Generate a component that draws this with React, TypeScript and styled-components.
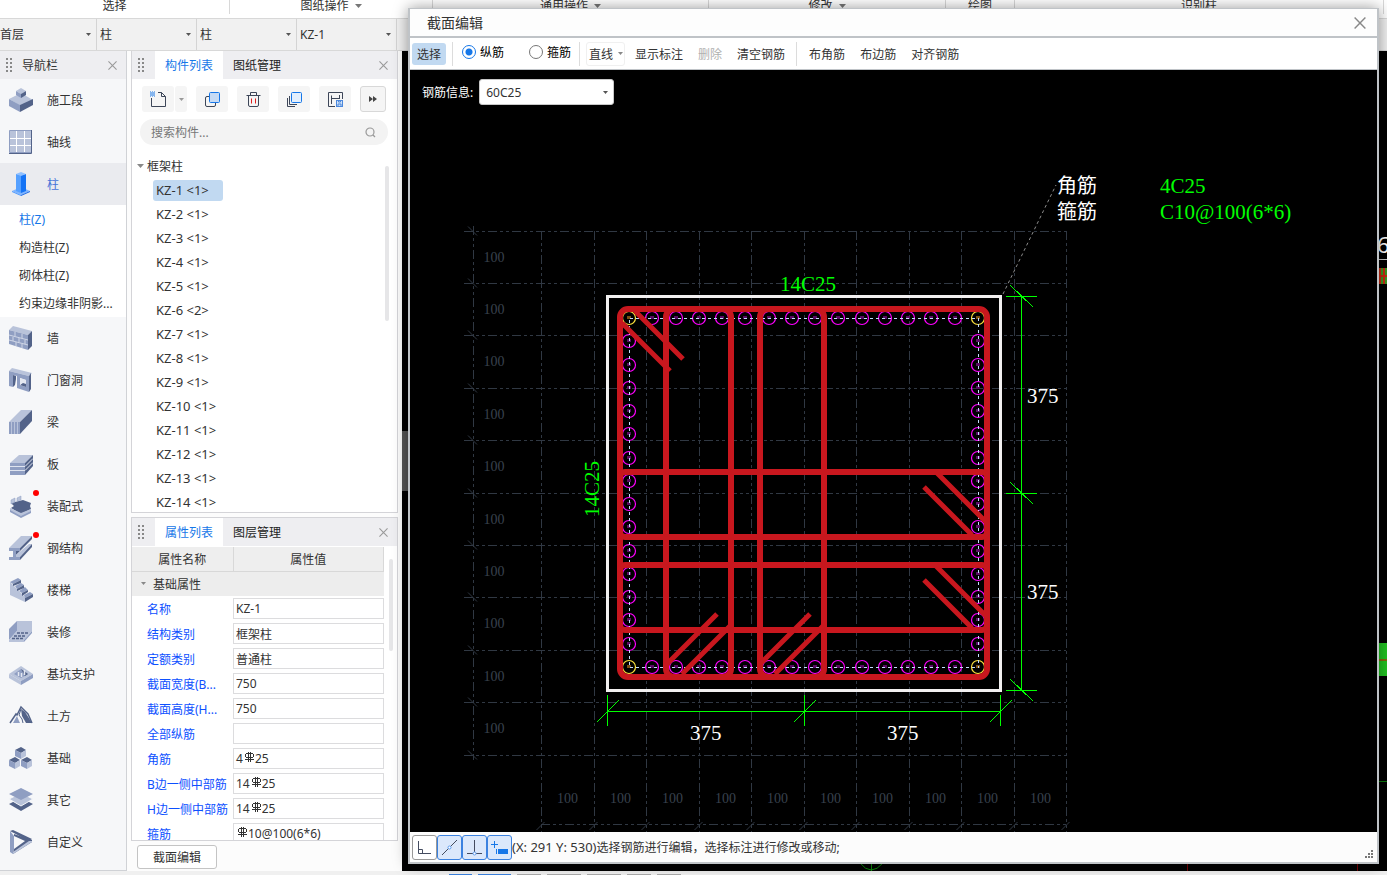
import React from "react";
import styled, { createGlobalStyle } from "styled-components";

const Global = createGlobalStyle`
  *, *::before, *::after { box-sizing: border-box; }
  body { margin: 0; }
  body, button, input, select {
    font-family: "Noto Sans", "Noto Sans CJK SC", sans-serif;
    font-size: 12px;
    color: #333;
  }
  button { cursor: pointer; }
`;

const blue = "#1677e8";

/* ---------- page frame ---------- */

const Page = styled.div`
  position: relative;
  display: flex;
  flex-direction: column;
  height: 100vh;
  overflow: hidden;
  background: #fcfcfc;
`;

const Ribbon = styled.header`
  display: flex;
  flex: none;
  height: 19px;
  overflow: hidden;
  background: #fff;
  border-bottom: 1px solid #d8d8d8;
`;

const RibbonGroup = styled.div<{ $basis: number; $last?: boolean }>`
  display: flex;
  flex: ${(p) => (p.$last ? "1 1" : "0 0")} ${(p) => p.$basis}px;
  justify-content: center;
  align-items: center;
  gap: 6px;
  height: 14px;
  padding-bottom: 2px;
  line-height: 12px;
  border-right: 1px solid #d8d8d8;
`;

const RibbonEnd = styled.div`
  flex: none;
  width: 3px;
`;

const ComboBar = styled.div`
  display: flex;
  flex: none;
  height: 32px;
  background: #f0f0f0;
  border-bottom: 1px solid #d8d8d8;
`;

const SelectBox = styled.label<{ $width: number; $boxed?: boolean }>`
  position: relative;
  display: flex;
  align-items: center;
  width: ${(p) => p.$width}px;
  height: ${(p) => (p.$boxed ? "26px" : "auto")};
  border: ${(p) => (p.$boxed ? "1px solid #c8c8c8" : "0 solid #d4d4d4")};
  border-right-width: 1px;
  border-radius: ${(p) => (p.$boxed ? "3px" : "0")};
  background: ${(p) => (p.$boxed ? "#fff" : "#f1f1f1")};
  > svg {
    position: absolute;
    right: 5px;
    pointer-events: none;
  }
`;

const Select = styled.select<{ $pad: number }>`
  appearance: none;
  width: 100%;
  height: 100%;
  padding: 0 16px 0 ${(p) => p.$pad}px;
  border: 0;
  background: transparent;
`;

const Work = styled.div`
  display: flex;
  flex: 1;
  min-height: 0;
`;

const Footer = styled.footer`
  display: flex;
  flex: none;
  gap: 6px;
  height: 4px;
  padding: 3px 0 0 449px;
  background: #f0f0f0;
`;

const FooterTab = styled.div<{ $width: number; $on?: boolean }>`
  width: ${(p) => p.$width}px;
  height: 1px;
  background: ${(p) => (p.$on ? "#3b82e0" : "#aaa")};
`;

/* ---------- shared panel parts ---------- */

const PanelHead = styled.div`
  display: flex;
  flex: none;
  align-items: stretch;
  height: 28px;
  padding-right: 7px;
  background: #eeeef1;
`;

const Grip = styled.div<{ $width: number }>`
  display: flex;
  align-items: center;
  width: ${(p) => p.$width}px;
  padding-left: 6px;
`;

const HeadTitle = styled.h2`
  flex: 1;
  margin: 0;
  font-size: 12px;
  font-weight: 400;
  line-height: 30px;
`;

const Tab = styled.button<{ $on?: boolean }>`
  padding: 0 10px;
  border: 0;
  background: ${(p) => (p.$on ? "#fff" : "transparent")};
  color: ${(p) => (p.$on ? blue : "#222")};
`;

const CloseButton = styled.button`
  display: flex;
  align-items: center;
  margin-left: auto;
  padding: 0 2px;
  border: 0;
  background: transparent;
`;

/* ---------- navigation ---------- */

const Nav = styled.nav`
  display: flex;
  flex: none;
  flex-direction: column;
  width: 127px;
  overflow: hidden;
  background: #f6f7f9;
  border-right: 1px solid #d0d2d6;
  border-bottom: 1px solid #d0d2d6;
`;

const NavItem = styled.button<{ $on?: boolean }>`
  display: flex;
  flex: none;
  align-items: center;
  gap: 14px;
  height: 42px;
  padding: 0 0 0 9px;
  border: 0;
  background: ${(p) => (p.$on ? "#eaebef" : "transparent")};
  color: ${(p) => (p.$on ? "#4674d8" : "#333")};
  text-align: left;
`;

const IconHolder = styled.span`
  position: relative;
  display: flex;
  width: 24px;
`;

const Dot = styled.i`
  position: absolute;
  top: -4px;
  right: -6px;
  width: 6px;
  height: 6px;
  border-radius: 50%;
  background: #f00;
`;

const SubList = styled.div`
  display: flex;
  flex: none;
  flex-direction: column;
  background: #fff;
`;

const SubItem = styled.button<{ $on?: boolean }>`
  height: 28px;
  padding: 0 0 0 19px;
  border: 0;
  background: transparent;
  color: ${(p) => (p.$on ? blue : "#333")};
  text-align: left;
  white-space: nowrap;
`;

/* ---------- component list and properties ---------- */

const Side = styled.div`
  display: flex;
  flex: none;
  flex-direction: column;
  gap: 4px;
  width: 275px;
  padding: 0 4px 0 4px;
  background: #fcfcfc;
`;

const Panel = styled.section<{ $fixed?: boolean }>`
  display: flex;
  flex: ${(p) => (p.$fixed ? "0 0 324px" : "1 1 0")};
  flex-direction: column;
  min-height: 0;
  overflow: hidden;
  border: 1px solid #d4d4d8;
  border-top-width: ${(p) => (p.$fixed ? "1px" : "0")};
  background: #fff;
`;

const ToolRow = styled.div`
  display: flex;
  gap: 9px;
  padding: 7px 9px 7px 10px;
`;

const ToolButton = styled.button<{ $width?: number; $outlined?: boolean }>`
  display: flex;
  align-items: center;
  justify-content: center;
  width: ${(p) => p.$width ?? 32}px;
  height: 26px;
  padding: 0;
  border: ${(p) => (p.$outlined ? "1px solid #d8d8d8" : "0")};
  border-radius: 3px;
  background: #f5f5f5;
`;

const SplitButton = styled.div`
  display: flex;
  gap: 1px;
`;

const Search = styled.label`
  display: flex;
  align-items: center;
  height: 26px;
  margin: 0 9px 0 8px;
  padding: 0 12px 0 11px;
  border-radius: 13px;
  background: #f3f3f3;
  input {
    flex: 1;
    min-width: 0;
    padding: 0;
    border: 0;
    background: transparent;
    outline: 0;
  }
  input::placeholder { color: #777; opacity: 1; }
`;

const TreeArea = styled.div`
  display: flex;
  flex: 1;
  justify-content: space-between;
  min-height: 0;
  padding: 9px 8px 0 5px;
`;

const Tree = styled.ul`
  margin: 0;
  padding: 0;
  overflow: hidden;
  list-style: none;
`;

const TreeGroup = styled.li`
  display: flex;
  align-items: center;
  gap: 3px;
  height: 24px;
`;

const TreeItem = styled.li`
  display: flex;
  align-items: center;
  height: 24px;
  padding-left: 16px;
`;

const TreeChip = styled.button<{ $on?: boolean }>`
  min-width: 70px;
  height: 21px;
  padding: 0 3px;
  border: 0;
  border-radius: 3px;
  background: ${(p) => (p.$on ? "#c1d9f1" : "transparent")};
  font-size: 13px;
  line-height: 20px;
  text-align: left;
  white-space: nowrap;
`;

const Thumb = styled.div<{ $height: number }>`
  flex: none;
  width: 4px;
  height: ${(p) => p.$height}px;
  margin-top: 12px;
  border-radius: 2px;
  background: #e6e6e8;
`;

const PropArea = styled.div`
  display: flex;
  justify-content: space-between;
  min-height: 0;
  padding: 1px 4px 0 0;
`;

const PropTable = styled.table`
  width: 252px;
  border-collapse: collapse;
  table-layout: fixed;
  th, td { padding: 0; font-weight: 400; }
  thead th {
    height: 24px;
    padding-top: 1px;
    background: #eee;
    border-right: 1px solid #d8d8d8;
    border-bottom: 1px solid #d8d8d8;
  }
  tbody tr { height: 25px; }
`;

const GroupCell = styled.th`
  background: #ededed;
  text-align: left;
  > span {
    display: flex;
    align-items: center;
    gap: 7px;
    padding-left: 9px;
  }
`;

const PropName = styled.th`
  color: #0d50ff;
  text-align: left;
  white-space: nowrap;
  > span { padding-left: 15px; }
`;

const ValueBox = styled.div`
  display: flex;
  align-items: center;
  height: 21px;
  padding-left: 2px;
  border: 1px solid #dcdcde;
  background: #fff;
  line-height: 18px;
  > svg { flex: none; margin: 0 1px 4px; }
  input {
    flex: 1;
    min-width: 0;
    height: 18px;
    padding: 0;
    border: 0;
    background: transparent;
    outline: 0;
  }
`;

const SideFoot = styled.div`
  flex: none;
  height: 26px;
  padding-left: 6px;
`;

const EditButton = styled.button`
  display: block;
  width: 80px;
  height: 24px;
  border: 1px solid #c4c4c4;
  border-radius: 3px;
  background: #fff;
`;

const ModelCanvas = styled.main`
  flex: 1;
  min-width: 0;
  background: #000;
  svg { display: block; width: 100%; height: 100%; }
`;

/* ---------- section editing window ---------- */

const Window = styled.section`
  position: absolute;
  top: 8px;
  right: 8px;
  bottom: 11px;
  left: 408px;
  display: flex;
  flex-direction: column;
  border: 1px solid #bfc3c7;
  border-width: 1px 2px 2px;
  background: #fcfcfc;
  box-shadow: 0 0 14px rgba(0, 0, 0, 0.4);
`;

const WindowTitle = styled.div`
  display: flex;
  flex: none;
  align-items: center;
  height: 29px;
  padding: 0 9px 0 17px;
  border-bottom: 2px solid #bfc3c7;
  background: #fdfdfd;
  h1 { margin: 0; font-size: 14px; font-weight: 400; line-height: 26px; }
`;

const WindowTools = styled.div`
  display: flex;
  flex: none;
  align-items: center;
  height: 32px;
  padding-left: 2px;
  background: #fff;
  border-bottom: 1px solid #bfc3c7;
`;

const Divider = styled.i`
  width: 1px;
  height: 24px;
  margin: 0 6px;
  background: #dcdcdc;
`;

const Action = styled.button<{ $on?: boolean }>`
  height: 22px;
  margin-left: ${(p) => (p.$on ? "0" : "5px")};
  padding: 1px 5px 0;
  border: 0;
  border-radius: 3px;
  background: ${(p) => (p.$on ? "#c1d9f1" : "transparent")};
  line-height: 22px;
  &:disabled { color: #b0b0b0; }
  ${Divider} + & { margin-left: 1px; }
`;

const RadioLabel = styled.label`
  display: flex;
  align-items: center;
  gap: 4px;
  height: 26px;
  padding: 0 2px 3px 3px;
  color: #000;
  & + & { margin-left: 20px; }
  input {
    appearance: none;
    width: 14px;
    height: 14px;
    margin: 0;
    border: 1px solid #777;
    border-radius: 50%;
    background: #fff;
  }
  input:checked {
    border-color: ${blue};
    background: radial-gradient(circle, ${blue} 0 3px, #fff 4px);
  }
`;

const SplitAction = styled.button`
  display: flex;
  align-items: center;
  gap: 5px;
  height: 24px;
  padding: 0 1px 0 2px;
  border: 1px solid #f0f0f0;
  border-radius: 3px;
  background: #fff;
`;

const Stage = styled.div`
  position: relative;
  flex: 1;
  min-height: 0;
  background: #000;
  > svg { display: block; width: 100%; height: 100%; }
`;

const BarInfo = styled.div`
  position: absolute;
  top: 9px;
  left: 12px;
  display: flex;
  align-items: center;
  gap: 6px;
  color: #fff;
`;

const WindowStatus = styled.div`
  display: flex;
  flex: none;
  align-items: center;
  height: 30px;
  padding: 0 4px 0 2px;
  background: #fcfcfc;
`;

const SnapButton = styled.button<{ $on?: boolean }>`
  display: flex;
  align-items: center;
  justify-content: center;
  width: 25px;
  height: 25px;
  padding: 0;
  border: 1px solid ${(p) => (p.$on ? "#3b82e0" : "#999")};
  border-radius: 3px;
  background: ${(p) => (p.$on ? "#dbe8fb" : "#fff")};
`;

const StatusText = styled.span`
  flex: 1;
  white-space: pre;
`;

const Coords = styled.span`
  font-size: 13px;
`;

const Resize = styled.span`
  align-self: flex-end;
  line-height: 0;
  padding-bottom: 4px;
`;

/* ---------- small drawings ---------- */

const Caret = ({ size = 5, color = "#555" }: { size?: number; color?: string }) => (
  <svg width={size} height={size === 5 ? 3 : 4} viewBox="0 0 8 4" preserveAspectRatio="none">
    <path d="M0 0h8L4 4z" fill={color} />
  </svg>
);

const Cross = ({ size = 9, color = "#999" }: { size?: number; color?: string }) => (
  <svg width={size} height={size} viewBox="0 0 10 10">
    <path d="M.5.5l9 9M9.5.5l-9 9" stroke={color} strokeWidth="1.2" />
  </svg>
);

const GripDots = () => (
  <svg width="7" height="14" fill="#888">
    {[0, 4, 8, 12].map((y) => (
      <React.Fragment key={y}>
        <rect x="0" y={y} width="2" height="2" />
        <rect x="4" y={y} width="2" height="2" />
      </React.Fragment>
    ))}
  </svg>
);

const RebarMark = () => (
  <svg width="10" height="10" viewBox="0 0 10 10" fill="none" stroke="#333" shapeRendering="crispEdges">
    <path d="M4.5 0v10M6.5 0v10M1 7.500h9M2 1.500h7M2 5.500h7M1.500 2v3M9.500 2v3" />
  </svg>
);

const L = "#b9c3da";
const M = "#8f9ec2";
const D = "#536389";

const navIcons: Record<string, React.ReactNode> = {
  施工段: (
    <>
      <path d="M12 5l12 7-12 6L0 11z" fill={L} />
      <path d="M0 11l11 6v7L0 18z" fill={M} />
      <path d="M24 11l-13 6v7l13-7z" fill={D} />
      <path d="M7 3l5-3 5 3-5 3z" fill={L} />
      <path d="M7 3l5 3v4L7 7z" fill={M} />
      <path d="M17 3l-5 3v4l5-3z" fill={D} />
    </>
  ),
  轴线: (
    <>
      <path d="M.5.5h22v22H.5z" fill={L} stroke={M} />
      <path d="M22.500 0v23.500H0" stroke={D} fill="none" />
      <path d="M7.500 1v21M15.500 1v21M1 8.500h21M1 15.500h21" stroke="#fff" />
    </>
  ),
  柱: (
    <>
      <path d="M3 19l9-4 9 4-9 4z" fill="#7fb5ff" />
      <path d="M3 19l9 4v1l-9-4z" fill="#4a98ff" />
      <path d="M21 19l-9 4v1l9-4z" fill="#1667e8" />
      <path d="M7 2l5 1v18l-5-2z" fill="#55a0ff" />
      <path d="M17 2l-5 1v18l5-2z" fill="#1473f5" />
      <path d="M7 2l5-2 5 2-5 2z" fill="#8fc0ff" />
    </>
  ),
  墙: (
    <>
      <path d="M0 4l4-4 19 5-4 4z" fill={L} />
      <path d="M0 4l19 5v15L0 18z" fill={M} />
      <path d="M23 5l-4 4v15l4-4z" fill={D} />
      <path d="M0 9l19 5M0 14l19 5M6 6v4M13 8v4M4 11v4M10 12v4M16 14v4M7 16v4M13 18v4" stroke="#cfd6e6" />
    </>
  ),
  门窗洞: (
    <>
      <path d="M0 3l3-3 20 5-3 3z" fill={L} />
      <path fillRule="evenodd" d="M0 3l20 5v16L8 20V8L4 7v12l-4-1zM11 10v7l6 2v-7z" fill={M} />
      <path d="M20 8l2-3v16l-2 3zM4 7l3 1v3l-1 6-2 2z" fill={D} />
      <path d="M11 17l3-3 3 1v4z" fill={D} />
      <path d="M11 10l6 2v4l-3-1-3 2z" fill="#e4e8f1" />
    </>
  ),
  梁: (
    <>
      <path d="M0 12L12 0h11L11 12z" fill={L} />
      <path d="M0 12h11v12H0z" fill={M} />
      <path d="M11 12L23 0v11L11 24z" fill={D} />
      <path d="M2.500 12v12M5.500 12v12M8.500 12v12" stroke={L} />
    </>
  ),
  板: (
    <>
      <path d="M1 11L10 3h14l-8 8z" fill={L} />
      <path d="M1 11h15v12H1z" fill={M} />
      <path d="M16 11l8-8v11l-8 9z" fill={D} />
      <path d="M1 14.500h15l8-8M1 18.500h15l8-8" stroke="#dfe4ef" fill="none" />
    </>
  ),
  装配式: (
    <>
      <path d="M1 15l11 6 10-5v3l-10 5-11-6z" fill={M} />
      <path d="M2 9l12-3 8 3-1 3 1 3-10 5-10-6 3-2z" fill={D} />
      <path d="M2 6l4-2v4L2 10zM8 4l4-2v4L8 7z" fill={L} stroke={M} strokeWidth=".5" />
      <path d="M1 14l11 5 10-4v2l-10 5-11-6z" fill={L} />
    </>
  ),
  钢结构: (
    <>
      <path d="M0 12L12 0h11L11 12z" fill={L} />
      <path d="M0 12h11v3H7v6h4v3H0v-3h4v-6H0z" fill={M} />
      <path d="M11 12L23 0v3L11 15zM7 15h4l-4 4z" fill={D} />
      <path d="M7 21v-2L20 8h3L11 21z" fill={L} />
      <path d="M11 21L23 8v3L11 24z" fill={D} />
    </>
  ),
  楼梯: (
    <>
      <path d="M1 4v13l15 7v-5z" fill={L} />
      <path d="M1 4l8-4 3 2-8 4zM6 8l6-3 3 2-7 4zM10 13l6-4 3 3-6 3zM15 17l6-3 3 2-8 4z" fill={M} />
      <path d="M4 6l8-4v3L4 8zM8 11l7-4v3l-7 3zM13 15l6-3v2l-6 4zM16 20l8-4v3l-8 5z" fill={D} />
    </>
  ),
  装修: (
    <>
      <path d="M8 1h15v10H8z" fill={L} />
      <path d="M0 9l8-8v10l-8 9z" fill={M} />
      <path d="M0 20l8-9h15l-8 9z" fill={L} />
      <path d="M0 20h15v2H0z" fill={L} />
      <path d="M15 20l8-9v2l-8 9z" fill={M} />
      <path d="M8 13h12M5 16h12M3 18.500h12" stroke={D} strokeWidth="1.500" strokeDasharray="3 1" />
    </>
  ),
  基坑支护: (
    <>
      <path d="M0 12l12-8 12 8-12 7z" fill={L} />
      <path d="M0 12l12 7v4L0 16z" fill={L} />
      <path d="M5 12l7-5 7 5-7 4z" fill={M} />
      <path d="M24 12l-12 7v4l12-7z" fill={M} />
      <path d="M12 7l7 5-3 2z" fill={D} />
      <path d="M9.500 14v-4M12.500 15v-4M15.500 13V8" stroke="#e4e8f1" strokeWidth="1.500" />
    </>
  ),
  土方: (
    <>
      <path d="M1 19l6-9 1 1 4-8 4 4 3 3 4 9" fill="none" stroke={D} strokeWidth="1.500" />
      <path d="M12 5l4 3 2 3 5 8H17l-4-7z" fill={D} />
      <path d="M4 19l4-7 2 5 1 2z" fill={M} />
      <path d="M12 5l-2 6 3 4 1 4" fill="none" stroke={D} />
    </>
  ),
  基础: (
    <>
      {[
        [6, 0],
        [0, 10],
        [12, 10],
      ].map(([x, y]) => (
        <g key={x + "-" + y} transform={`translate(${x} ${y + 1})`}>
          <path d="M0 3l6-3 5 3-5 3z" fill={D} />
          <path d="M0 3l6 3v6L0 9z" fill={M} />
          <path d="M11 3L6 6v6l5-3z" fill={L} />
        </g>
      ))}
    </>
  ),
  其它: (
    <>
      <path d="M0 16l12-6 12 6-12 7z" fill={D} />
      <path d="M0 11l12-6 12 6-12 7z" fill={L} stroke="#f6f7f9" />
      <path d="M0 6l12-6 12 6-12 6z" fill={M} />
    </>
  ),
  自定义: (
    <>
      <path d="M1 1l3-1 19 9-3 2z" fill={D} />
      <path d="M1 1l4 5v13l-1 5-3-2z" fill={M} />
      <path d="M5 19l11-8-11-5V4l18 6v2L4 24z" fill={D} />
      <path d="M20 11h3v1L4 24v-2z" fill={L} />
    </>
  ),
};

const NavIcon = ({ name }: { name: string }) => (
  <svg width="24" height="24" viewBox="0 0 24 24">
    {navIcons[name]}
  </svg>
);

const NewIcon = () => (
  <svg width="17" height="17" viewBox="0 0 17 17" fill="none" stroke="#3d4658">
    <path d="M1.500 7v8.500h14V5.500l-4-4H8M11.500 1.500v4h4" />
    <path
      d="M0 1h1M2 1h1M4 1h1M1 2h1M3 2h1M0 3h1M2 3h1M4 3h1M1 4h1M3 4h1M0 5h1M2 5h1M4 5h1"
      stroke={blue}
      strokeWidth="1.200"
    />
  </svg>
);

const CopyIcon = () => (
  <svg width="17" height="17" viewBox="0 0 17 17" fill="none">
    <rect x="1.500" y="5.500" width="10" height="10" rx="1.500" stroke="#3d4658" />
    <rect x="5.500" y="1.500" width="10" height="10" rx="1" fill="#c6dbf5" stroke={blue} />
  </svg>
);

const TrashIcon = () => (
  <svg width="17" height="17" viewBox="0 0 17 17" fill="none" stroke="#3d4658">
    <path d="M1.500 4.500h14M5.500 4V1.500h6V4M3.500 5v9q0 1.500 1.500 1.500h7q1.500 0 1.500-1.500V5" />
    <path d="M6.500 7.500v5M10.500 7.500v5" stroke="#e02020" />
  </svg>
);

const LayersIcon = () => (
  <svg width="17" height="17" viewBox="0 0 17 17" fill="none" stroke="#3d4658">
    <path d="M1.500 7v8.500H9M3.500 5v8.500H11" />
    <rect x="5.500" y="1.500" width="10" height="10" rx="1" fill="#e3effd" stroke={blue} />
  </svg>
);

const StoreIcon = () => (
  <svg width="17" height="17" viewBox="0 0 17 17" fill="none" stroke="#3d4658">
    <path d="M8 15.500H1.500v-14h14V8M4.500 13V4.500M4.500 7.500h8M12.500 4v4" />
    <rect x="9.500" y="9.500" width="6" height="6" fill="#cfe0f5" stroke="#4b88dd" />
    <path d="M11 15v-2h3v2M11.500 10v1h2v-1" stroke="#4b88dd" />
  </svg>
);

const MoreIcon = () => (
  <svg width="8" height="6" fill="#444">
    <path d="M0 0l4 3-4 3zM4 0l4 3-4 3z" />
  </svg>
);

const SearchIcon = () => (
  <svg width="11" height="11" viewBox="0 0 11 11" fill="none" stroke="#999" strokeWidth="1.200">
    <circle cx="5" cy="5" r="4" />
    <path d="M8 8l2 2" />
  </svg>
);

/* ---------- section drawing ---------- */

const range = (n: number) => Array.from({ length: n }, (_, i) => i);
const serif = '"Liberation Serif", "Noto Sans CJK SC", serif';
const barStep = 349 / 15;

const SectionDrawing = () => {
  const xs = range(11).map((i) => Math.floor(131.5 + i * 52.5) + 0.5);
  const ys = range(11).map((i) => Math.floor(161 + i * 52.4) + 0.5);
  const bars: [number, number, boolean][] = [];
  range(16).forEach((i) => {
    const corner = i === 0 || i === 15;
    const p = Math.round(i * barStep);
    bars.push([219 + p, 248, corner], [219 + p, 597, corner]);
    if (!corner) bars.push([219, 248 + p, false], [568, 248 + p, false]);
  });
  return (
    <svg role="img" aria-label="截面配筋图" fontFamily={serif}>
      <g stroke="#303843" strokeDasharray="9 3 3 3 3 3" fill="none" shapeRendering="crispEdges">
        {ys.map((y) => (
          <path key={y} d={`M54 ${y}H656`} />
        ))}
        {xs.map((x) => (
          <path key={x} d={`M${x} 161V762`} />
        ))}
        <path d="M63.500 156V690M131 754.500H657" />
      </g>
      <g stroke="#303843">
        {ys.map((y) => (
          <path key={y} d={`M58 ${y - 5}l9 9`} />
        ))}
        {xs.map((x) => (
          <path key={x} d={`M${x - 5} 760l8-8`} />
        ))}
      </g>
      <g fill="#39424e" fontSize="14" textAnchor="middle">
        {ys.slice(0, 10).map((y) => (
          <text key={y} x="84" y={y + 30}>100</text>
        ))}
        {xs.slice(0, 10).map((x) => (
          <text key={x} x={x + 26} y="733">100</text>
        ))}
      </g>

      <rect x="197.500" y="226.500" width="393" height="394" fill="none" stroke="#f2f0f0" strokeWidth="3" shapeRendering="crispEdges" />

      <g fill="none">
        {bars.map(([x, y, corner]) => (
          <g key={x + "," + y}>
            <rect x={x - 2} y={y - 2} width="4" height="3" fill={corner ? "#7a5010" : "#5a0a64"} />
            <circle cx={x} cy={y} r="6.500" stroke={corner ? "#ffe43c" : "#f0f"} strokeWidth="1.200" />
          </g>
        ))}
        <path
          d="M219.500 248.500H568.500V597.500H219.500Z"
          stroke="#c4dcff"
          strokeDasharray="3 3"
          shapeRendering="crispEdges"
        />
      </g>

      <g fill="none" stroke="#c8171e" strokeWidth="6">
        <rect x="210" y="239" width="367" height="368" rx="8" />
        <rect x="256" y="239" width="65" height="368" rx="8" />
        <rect x="350" y="239" width="64" height="368" rx="8" />
        <rect x="210" y="402" width="367" height="65" rx="5" />
        <rect x="210" y="495" width="367" height="65" rx="5" />
        <g strokeWidth="5">
          <path d="M225 241l48 48M212 253l48 48" />
          <path d="M307 544l-50 50M320 556l-48 48" />
          <path d="M400 544l-50 50M413 556l-48 48" />
          <path d="M514 417l48 48M526 402l51 51" />
          <path d="M514 510l48 48M526 496l51 51" />
        </g>
      </g>

      <g stroke="#0f0" fill="none" shapeRendering="crispEdges">
        <path d="M611.500 226V621M596 226.500h31M596 423.500h31M596 620.500h31" />
        <path d="M197 641.500H591M197.500 625v31M394.500 625v31M590.500 625v31" />
        <path d="M600 215l23 22M600 412l23 22M600 609l23 22" />
        <path d="M187 652l22-22M384 652l22-22M580 652l22-22" />
      </g>
      <path d="M593 224L646 115" stroke="#8d8d8d" strokeDasharray="3 3" />

      <g fill="#fff" fontSize="21">
        <text x="617" y="333">375</text>
        <text x="617" y="529">375</text>
        <text x="280" y="670">375</text>
        <text x="477" y="670">375</text>
        <text x="647" y="123" fontSize="20">角筋</text>
        <text x="647" y="149" fontSize="20">箍筋</text>
      </g>
      <g fill="#0f0" fontSize="21">
        <text x="750" y="123">4C25</text>
        <text x="750" y="149">C10@100(6*6)</text>
        <text x="370" y="221">14C25</text>
        <text x="189" y="447" transform="rotate(-90 189 447)">14C25</text>
      </g>
    </svg>
  );
};

/* ---------- data ---------- */

const ribbon = [
  { text: "选择", w: 230 },
  { text: "图纸操作", w: 203, menu: true },
  { text: "通用操作", w: 276, menu: true },
  { text: "修改", w: 237, menu: true },
  { text: "绘图", w: 69 },
  { text: "识别柱", w: 369 },
];

const combos = [
  { label: "楼层", value: "首层", w: 97, pad: 0 },
  { label: "类别", value: "柱", w: 100, pad: 3 },
  { label: "类型", value: "柱", w: 100, pad: 3 },
  { label: "构件", value: "KZ-1", w: 100, pad: 3 },
];

const navBefore = ["施工段", "轴线", "柱"];
const subItems = ["柱(Z)", "构造柱(Z)", "砌体柱(Z)", "约束边缘非阴影..."];
const navAfter = ["墙", "门窗洞", "梁", "板", "装配式", "钢结构", "楼梯", "装修", "基坑支护", "土方", "基础", "其它", "自定义"];
const dotted = ["装配式", "钢结构"];

const members = range(14).map((i) => `KZ-${i + 1} <${i === 5 ? 2 : 1}>`);

const props: { name: string; value: string; pre?: string; mark?: boolean }[] = [
  { name: "名称", value: "KZ-1" },
  { name: "结构类别", value: "框架柱" },
  { name: "定额类别", value: "普通柱" },
  { name: "截面宽度(B...", value: "750" },
  { name: "截面高度(H...", value: "750" },
  { name: "全部纵筋", value: "" },
  { name: "角筋", pre: "4", mark: true, value: "25" },
  { name: "B边一侧中部筋", pre: "14", mark: true, value: "25" },
  { name: "H边一侧中部筋", pre: "14", mark: true, value: "25" },
  { name: "箍筋", pre: "", mark: true, value: "10@100(6*6)" },
];

const NavEntry = ({ name }: { name: string }) => (
  <NavItem $on={name === "柱"}>
    <IconHolder>
      <NavIcon name={name} />
      {dotted.includes(name) && <Dot />}
    </IconHolder>
    {name}
  </NavItem>
);

const Tabs = ({ items }: { items: string[] }) => (
  <PanelHead>
    <Grip $width={23}>
      <GripDots />
    </Grip>
    {items.map((t, i) => (
      <Tab key={t} $on={i === 0}>{t}</Tab>
    ))}
    <CloseButton aria-label="关闭">
      <Cross />
    </CloseButton>
  </PanelHead>
);

export default function App() {
  return (
    <Page>
      <Global />
      <Ribbon>
        {ribbon.map((g, i) => (
          <RibbonGroup key={g.text} $basis={g.w} $last={i === ribbon.length - 1}>
            {g.text}
            {g.menu && <Caret size={7} color="#777" />}
          </RibbonGroup>
        ))}
        <RibbonEnd />
      </Ribbon>
      <ComboBar>
        {combos.map((c) => (
          <SelectBox key={c.label} $width={c.w}>
            <Select $pad={c.pad} aria-label={c.label}>
              <option>{c.value}</option>
            </Select>
            <Caret />
          </SelectBox>
        ))}
      </ComboBar>

      <Work>
        <Nav>
          <PanelHead>
            <Grip $width={22}>
              <GripDots />
            </Grip>
            <HeadTitle>导航栏</HeadTitle>
            <CloseButton aria-label="关闭">
              <Cross />
            </CloseButton>
          </PanelHead>
          {navBefore.map((n) => (
            <NavEntry key={n} name={n} />
          ))}
          <SubList>
            {subItems.map((s, i) => (
              <SubItem key={s} $on={i === 0}>{s}</SubItem>
            ))}
          </SubList>
          {navAfter.map((n) => (
            <NavEntry key={n} name={n} />
          ))}
        </Nav>

        <Side>
          <Panel>
            <Tabs items={["构件列表", "图纸管理"]} />
            <ToolRow>
              <SplitButton>
                <ToolButton aria-label="新建"><NewIcon /></ToolButton>
                <ToolButton $width={12} aria-label="新建选项"><Caret color="#999" /></ToolButton>
              </SplitButton>
              <ToolButton aria-label="复制"><CopyIcon /></ToolButton>
              <ToolButton aria-label="删除构件"><TrashIcon /></ToolButton>
              <ToolButton aria-label="层间复制"><LayersIcon /></ToolButton>
              <ToolButton aria-label="存档"><StoreIcon /></ToolButton>
              <ToolButton $width={26} $outlined aria-label="更多"><MoreIcon /></ToolButton>
            </ToolRow>
            <Search>
              <input placeholder="搜索构件..." aria-label="搜索构件" />
              <SearchIcon />
            </Search>
            <TreeArea>
              <Tree>
                <TreeGroup>
                  <Caret size={7} color="#888" />
                  框架柱
                </TreeGroup>
                {members.map((m, i) => (
                  <TreeItem key={m}>
                    <TreeChip $on={i === 0}>{m}</TreeChip>
                  </TreeItem>
                ))}
              </Tree>
              <Thumb $height={155} />
            </TreeArea>
          </Panel>

          <Panel $fixed>
            <Tabs items={["属性列表", "图层管理"]} />
            <PropArea>
              <PropTable>
                <colgroup>
                  <col style={{ width: 101 }} />
                  <col />
                </colgroup>
                <thead>
                  <tr>
                    <th>属性名称</th>
                    <th>属性值</th>
                  </tr>
                </thead>
                <tbody>
                  <tr>
                    <GroupCell colSpan={2}>
                      <span>
                        <Caret color="#888" />
                        基础属性
                      </span>
                    </GroupCell>
                  </tr>
                  {props.map((p) => (
                    <tr key={p.name}>
                      <PropName><span>{p.name}</span></PropName>
                      <td>
                        <ValueBox>
                          {p.pre}
                          {p.mark && <RebarMark />}
                          <input defaultValue={p.value} aria-label={p.name} />
                        </ValueBox>
                      </td>
                    </tr>
                  ))}
                </tbody>
              </PropTable>
              <Thumb $height={92} />
            </PropArea>
          </Panel>
          <SideFoot>
            <EditButton>截面编辑</EditButton>
          </SideFoot>
        </Side>

        <ModelCanvas>
          <svg>
            <path d="M0 380h6v60H0z" fill="#555" />
            <svg x="100%" overflow="visible">
              <text x="-10" y="202" fill="#fff" fontSize="22">6</text>
              <path d="M-10 208.500h10" stroke="#ccc" />
              <path d="M-10 217h10v16h-10z" fill="#3d9a22" />
              <path d="M-7 217v16M-3 217v16M-10 225h10" stroke="#c62a12" strokeWidth="2" />
              <path d="M-10 592h10v33h-10z" fill="#22c322" />
              <path d="M-10 609h10" stroke="#8a6410" strokeWidth="2" />
              <path d="M-10 730.500h10" stroke="#0a7a0a" />
              <path d="M-199.500 812v8M-29.500 812v8" stroke="#700" />
              <path d="M-527 812q11 14 23 0M-515.500 812v8" stroke="#0a8a0a" fill="none" />
            </svg>
          </svg>
        </ModelCanvas>
      </Work>

      <Footer>
        <FooterTab $width={23} $on />
        <FooterTab $width={33} $on />
        <FooterTab $width={24} />
        <FooterTab $width={34} />
        <FooterTab $width={34} />
        <FooterTab $width={24} />
        <FooterTab $width={24} />
      </Footer>

      <Window>
        <WindowTitle>
          <h1>截面编辑</h1>
          <CloseButton aria-label="关闭窗口">
            <Cross size={12} color="#888" />
          </CloseButton>
        </WindowTitle>
        <WindowTools>
          <Action $on>选择</Action>
          <Divider />
          <RadioLabel>
            <input type="radio" name="kind" defaultChecked />
            纵筋
          </RadioLabel>
          <RadioLabel>
            <input type="radio" name="kind" />
            箍筋
          </RadioLabel>
          <Divider />
          <SplitAction>
            直线
            <Caret color="#888" />
          </SplitAction>
          <Action>显示标注</Action>
          <Action disabled>删除</Action>
          <Action>清空钢筋</Action>
          <Divider />
          <Action>布角筋</Action>
          <Action>布边筋</Action>
          <Action>对齐钢筋</Action>
        </WindowTools>
        <Stage>
          <SectionDrawing />
          <BarInfo>
            <label htmlFor="bar-info">钢筋信息:</label>
            <SelectBox as="div" $width={135} $boxed>
              <Select id="bar-info" $pad={6}>
                <option>60C25</option>
              </Select>
              <Caret />
            </SelectBox>
          </BarInfo>
        </Stage>
        <WindowStatus>
          <SnapButton aria-label="正交">
            <svg width="15" height="15" fill="none" stroke="#444c60">
              <path d="M1.500 1v12.500H14M1.500 9.500h4v4" />
            </svg>
          </SnapButton>
          <SnapButton $on aria-label="中点">
            <svg width="17" height="17" fill="none" stroke="#444c60">
              <path d="M1 16L16 1" />
              <circle cx="8.500" cy="8.500" r="1.500" stroke="#5a9bf0" fill="#fff" />
            </svg>
          </SnapButton>
          <SnapButton $on aria-label="垂点">
            <svg width="17" height="17" fill="none" stroke="#444c60">
              <path d="M8.500 1v13M1 14.500h15" />
              <circle cx="8.500" cy="14.500" r="1.500" stroke="#5a9bf0" fill="#fff" />
            </svg>
          </SnapButton>
          <SnapButton $on aria-label="动态输入">
            <svg width="17" height="15" fill={blue}>
              <path d="M0 4h3V1h1v3h3v1H4v3H3V5H0zM7 9h10v5H7zM6 9v5H5V9z" />
            </svg>
          </SnapButton>
          <StatusText>
            <Coords>(X: 291 Y: 530)</Coords>选择钢筋进行编辑，选择标注进行修改或移动;
          </StatusText>
          <Resize>
            <svg width="8" height="8" fill="#777">
              <path d="M6 0h2v2H6zM3 3h2v2H3zM6 3h2v2H6zM0 6h2v2H0zM3 6h2v2H3zM6 6h2v2H6z" />
            </svg>
          </Resize>
        </WindowStatus>
      </Window>
    </Page>
  );
}
